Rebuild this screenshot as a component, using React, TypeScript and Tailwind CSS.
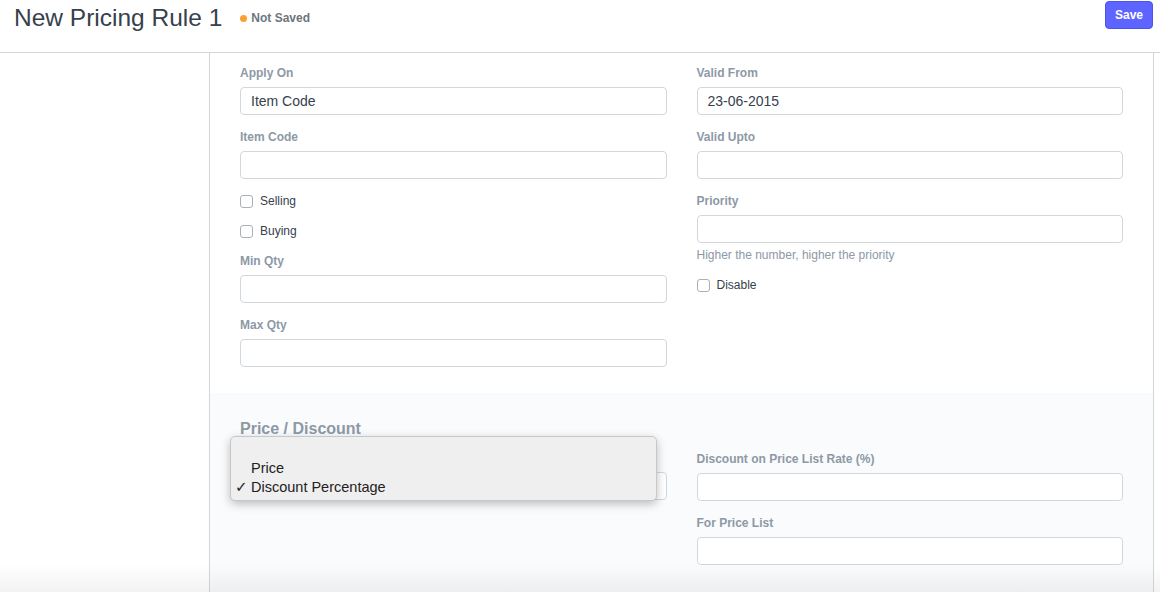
import React from "react";

const Label = ({ children }: { children?: React.ReactNode }) => (
  <div className="h-[18px] mb-[5px] text-[12px] leading-[18px] font-bold text-[#8d99a6]">{children}</div>
);

const Input = ({ value }: { value?: string }) => (
  <div className="h-[28px] rounded-[4px] border border-[#d1d8dd] bg-white px-[10px] text-[14px] leading-[26px] text-[#36414c]">
    {value}
  </div>
);

const Field = ({ label, value }: { label?: string; value?: string }) => (
  <div className="mb-[13px]">
    <Label>{label}</Label>
    <Input value={value} />
  </div>
);

const Check = ({ label }: { label: string }) => (
  <div className="h-[16px] mb-[14px] flex items-center gap-[7px]">
    <span className="w-[13px] h-[13px] rounded-[3px] border border-[#a9b0b6] bg-white" />
    <span className="text-[12px] text-[#36414c]">{label}</span>
  </div>
);

export default function App() {
  return (
    <div className="relative h-[592px] overflow-hidden bg-white font-['Liberation_Sans',Arial,sans-serif]">
      <div className="h-[53px] border-b border-[#d1d8dd] flex justify-between items-start pl-[14px] pr-[7px]">
        <div className="flex items-center pt-[2px] h-[34px]">
          <span className="text-[24.5px] leading-[32px] text-[#36414c]">New Pricing Rule 1</span>
          <span className="ml-[18px] w-[7px] h-[7px] rounded-full bg-[#ff9f31]" />
          <span className="ml-[4px] text-[12px] font-bold text-[#6c7680]">Not Saved</span>
        </div>
        <button className="mt-[1px] h-[28px] w-[48px] rounded-[4px] bg-[#5e64ff] border border-[#4d54ee] text-white text-[12px] font-bold">
          Save
        </button>
      </div>
      <div className="flex">
        <div className="w-[209px] shrink-0" />
        <div className="w-[945px] shrink-0 border-l border-r border-[#d1d8dd] min-h-[600px]">
          <div className="px-[30px] pt-[11px] pb-[13px] grid grid-cols-2 gap-x-[30px] bg-white">
            <div>
              <Field label="Apply On" value="Item Code" />
              <Field label="Item Code" />
              <div className="pt-[1px]">
                <Check label="Selling" />
                <Check label="Buying" />
              </div>
              <div className="-mt-[1px]">
                <Field label="Min Qty" />
                <Field label="Max Qty" />
              </div>
            </div>
            <div>
              <Field label="Valid From" value="23-06-2015" />
              <Field label="Valid Upto" />
              <div>
                <Label>Priority</Label>
                <Input />
                <div className="mt-[3px] h-[18px] text-[12px] leading-[18px] text-[#8d99a6]">
                  Higher the number, higher the priority
                </div>
              </div>
              <div className="mt-[13px]">
                <Check label="Disable" />
              </div>
            </div>
          </div>
          <div className="bg-[#fafbfc] px-[30px] pt-[26px] min-h-[300px]">
            <div className="h-[20px] mb-[11px] text-[16px] leading-[20px] font-bold text-[#8d99a6]">Price / Discount</div>
            <div className="grid grid-cols-2 gap-x-[30px]">
              <div className="relative">
                <div className="-mt-[1px]">
                  <Field />
                </div>
                <div className="absolute left-[-10px] top-[-14px] w-[427px] rounded-[5px] border border-[#c8c8c8] bg-[#efefef] shadow-[0_3px_10px_rgba(0,0,0,0.25)] py-[3px] text-[14.5px] leading-[19px] text-[#222]">
                  <div className="h-[19px]" />
                  <div className="pl-[20px]">Price</div>
                  <div className="relative pl-[20px]">
                    <span className="absolute left-[4px] top-0 font-['DejaVu_Sans',sans-serif] text-[15px]">✓</span>
                    Discount Percentage
                  </div>
                </div>
              </div>
              <div>
                <Field label="Discount on Price List Rate (%)" />
                <Field label="For Price List" />
              </div>
            </div>
          </div>
        </div>
      </div>
      <div className="pointer-events-none absolute left-0 right-0 bottom-0 h-[28px] bg-gradient-to-b from-transparent to-black/[0.05]" />
    </div>
  );
}
